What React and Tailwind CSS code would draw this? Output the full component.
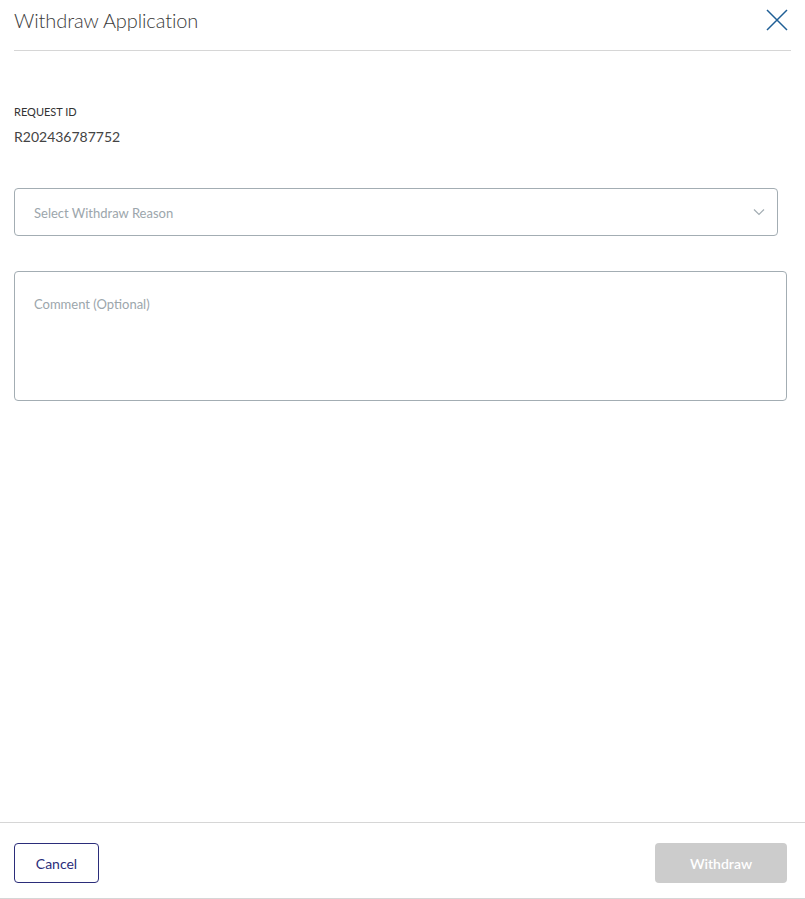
import React from "react";

export default function App() {
  return (
    <div className="h-[899px] w-[805px] bg-white flex flex-col text-[#333]" style={{ fontFamily: "Lato, 'Noto Sans', sans-serif" }}>
      <div className="px-[14px]">
        <div className="flex items-center justify-between h-[51px] border-b border-[#d6d6d6] pb-[11px]">
          <h1 className="text-[20px] text-[#3a3a3a] font-light tracking-[-0.1px]">Withdraw Application</h1>
          <button className="w-[24px] h-[24px] flex items-center justify-center mr-[2px]">
            <svg width="22" height="22" viewBox="0 0 22 22" fill="none" stroke="#1f5f96" strokeWidth="1.5">
              <path d="M1 1 L21 21 M21 1 L1 21" />
            </svg>
          </button>
        </div>
        <div className="mt-[54px]">
          <div className="text-[11px] uppercase text-[#333] leading-[13px]">Request ID</div>
          <div className="text-[14px] text-[#444] mt-[10px] leading-[17px]">R202436787752</div>
        </div>
        <div className="mt-[43px] w-[764px] h-[48px] border border-[#a3adb3] rounded-[4px] flex items-center justify-between pl-[19px] pr-[12px]">
          <span className="text-[13px] text-[#9ca6ac] mt-[3px]">Select Withdraw Reason</span>
          <svg width="12" height="8" viewBox="0 0 12 8" fill="none" stroke="#a3adb3" strokeWidth="1.2">
            <path d="M1 1.5 L6 6.5 L11 1.5" />
          </svg>
        </div>
        <div className="mt-[35px] w-[773px] h-[130px] border border-[#a3adb3] rounded-[4px] pl-[19px] pt-[19px]">
          <span className="text-[13px] text-[#9ca6ac]">Comment (Optional)</span>
        </div>
      </div>
      <div className="flex-1" />
      <div className="border-t border-[#d6d6d6] border-b h-[77px] flex items-start justify-between pl-[14px] pr-[18px] pt-[20px]">
        <button className="w-[85px] h-[40px] border border-[#2b2d7a] rounded-[4px] text-[#2b2d7a] text-[14px]">Cancel</button>
        <button className="w-[132px] h-[40px] bg-[#cccccc] rounded-[4px] text-white text-[14px] font-semibold">Withdraw</button>
      </div>
    </div>
  );
}
